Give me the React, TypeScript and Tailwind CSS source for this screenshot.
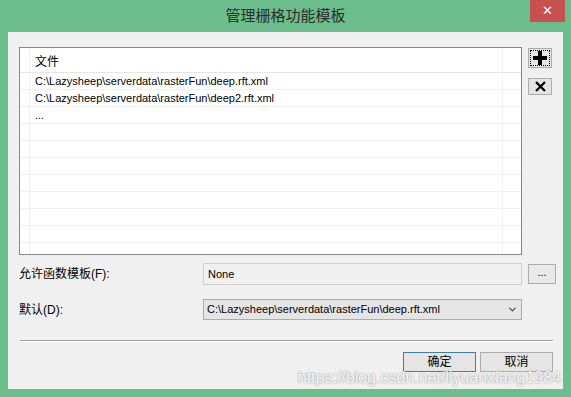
import { ChevronDown } from "lucide-react";

const FONT = { fontFamily: '"Liberation Sans", "Noto Sans CJK SC", sans-serif' };

const files = [
  "C:\\Lazysheep\\serverdata\\rasterFun\\deep.rft.xml",
  "C:\\Lazysheep\\serverdata\\rasterFun\\deep2.rft.xml",
  "...",
];

const Row = ({ text }: { text?: string }) => (
  <div className="flex h-[17px] shrink-0 border-b border-[#f0f0f0]">
    <div className="w-[10px] border-r border-[#f0f0f0]" />
    <div className="flex-1 pl-[5px] text-[11px] leading-[16px] text-black">{text}</div>
    <div className="w-[19px] border-l border-[#f0f0f0]" />
  </div>
);

const App = () => {
  const blanks = Array.from({ length: 8 });
  return (
    <div
      className="relative flex h-[397px] w-[571px] flex-col overflow-hidden bg-[#6bbd8b]"
      style={FONT}
    >
      {/* title bar */}
      <div className="relative flex h-[32px] shrink-0 items-center justify-center">
        <span className="text-[15px] text-[#2b2b2b]">管理栅格功能模板</span>
        <div className="absolute right-[6px] top-0 flex h-[22px] w-[35px] items-center justify-center bg-[#c75050] text-[13px] text-white">
          ✕
        </div>
      </div>

      {/* client */}
      <div className="mx-[8px] flex h-[357px] flex-col bg-[#f0f0f0] pl-[11px] pt-[15px]">
        <div className="flex">
          <div className="flex h-[208px] w-[503px] flex-col overflow-hidden border border-[#828790] bg-white">
            <div className="flex h-[25px] shrink-0 border-b border-[#e5e5e5]">
              <div className="w-[10px] border-r border-[#f0f0f0]" />
              <div className="flex-1 pl-[5px] pt-[5px] text-[12px] text-black">文件</div>
              <div className="w-[19px] border-l border-[#f0f0f0]" />
            </div>
            {files.map((f) => (
              <Row key={f} text={f} />
            ))}
            {blanks.map((_, i) => (
              <Row key={i} />
            ))}
          </div>
          <div className="ml-[6px] mt-[1px] flex flex-col gap-[10px]">
            <div className="flex h-[20px] w-[24px] items-center justify-center border border-[#acacac] bg-[#e5e5e5] p-[1px]">
              <div className="flex h-full w-full items-center justify-center border border-dotted border-black">
                <svg width="16" height="16" viewBox="0 0 16 16">
                  <path d="M6 1h4v5h5v4h-5v5H6v-5H1V6h5z" fill="#000" />
                </svg>
              </div>
            </div>
            <div className="flex h-[17px] w-[24px] items-center justify-center border border-[#acacac] bg-[#e5e5e5]">
              <svg width="11" height="11" viewBox="0 0 11 11">
                <path d="M1 1l9 9M10 1l-9 9" stroke="#000" strokeWidth="2.2" />
              </svg>
            </div>
          </div>
        </div>

        <div className="mt-[8px] flex items-center">
          <div className="w-[184px] text-[12px] text-black">允许函数模板(F):</div>
          <div className="flex h-[22px] w-[319px] items-center border border-[#cfcfcf] bg-[#f0f0f0] pl-[4px] text-[11px] text-black">
            None
          </div>
          <div className="ml-[6px] flex h-[20px] w-[28px] items-center justify-center border border-[#acacac] bg-[#e9e9e9] pb-[4px] text-[11px] text-black">
            ...
          </div>
        </div>

        <div className="mt-[14px] flex items-center">
          <div className="w-[184px] text-[12px] text-black">默认(D):</div>
          <div className="flex h-[21px] w-[319px] items-center justify-between border border-[#acacac] bg-[#e5e5e5] pl-[3px] pr-[3px] text-[11px] text-black">
            <span>C:\Lazysheep\serverdata\rasterFun\deep.rft.xml</span>
            <ChevronDown size={11} strokeWidth={2.5} className="text-[#444]" />
          </div>
        </div>

        <div className="mr-[10px] mt-[20px] ml-[1px] h-[2px] border-b border-t border-b-white border-t-[#a0a0a0]" />

        <div className="mr-[10px] mt-[10px] flex justify-end gap-[4px]">
          <div className="flex h-[20px] w-[73px] items-center justify-center border border-[#3c7fb1] bg-[#e5e5e5] text-[12px] text-black">
            确定
          </div>
          <div className="flex h-[20px] w-[73px] items-center justify-center border border-[#acacac] bg-[#e5e5e5] text-[12px] text-black">
            取消
          </div>
        </div>
      </div>

      {/* watermark */}
      <div className="absolute right-[10px] top-[368px] text-[16px] leading-[20px] text-[#f6f6f6] [text-shadow:0_0_2px_rgba(0,0,0,0.45)]">
        https://blog.csdn.net/liyuanxiang1984
      </div>
    </div>
  );
};

export default App;
